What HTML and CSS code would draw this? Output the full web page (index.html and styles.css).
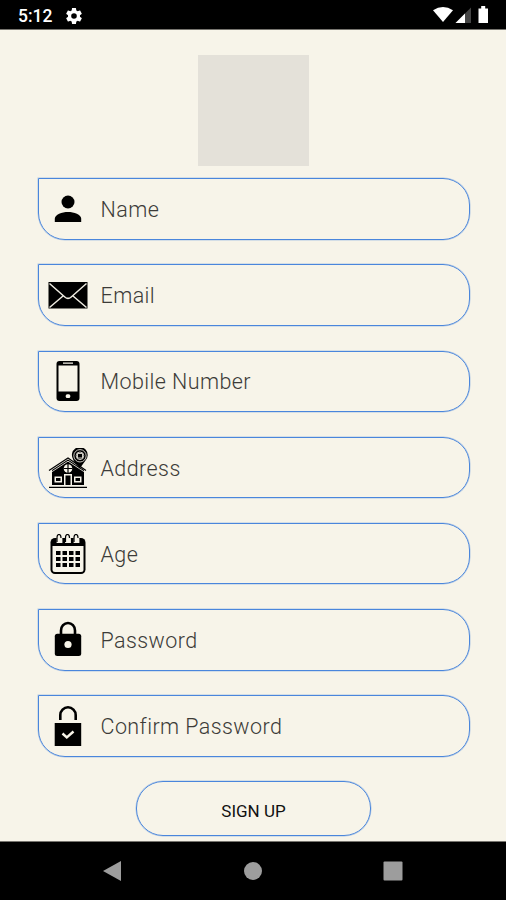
FILE: index.html
```html
<!DOCTYPE html>
<html lang="en">
<head>
<meta charset="utf-8">
<title>Sign up</title>
<link rel="stylesheet" href="styles.css">
</head>
<body>
<header class="status">
  <span class="time">5:12</span>
  <svg class="gear" viewBox="2 2 20 20"><path fill-rule="evenodd" d="M19.43 12.98c.04-.32.07-.64.07-.98s-.03-.66-.07-.98l2.11-1.65c.19-.15.24-.42.12-.64l-2-3.46c-.12-.22-.39-.3-.61-.22l-2.49 1c-.52-.4-1.08-.73-1.69-.98l-.38-2.65A.49.49 0 0 0 14 2h-4c-.25 0-.46.18-.49.42l-.38 2.65c-.61.25-1.17.59-1.69.98l-2.49-1c-.23-.09-.49 0-.61.22l-2 3.46c-.13.22-.07.49.12.64l2.11 1.65c-.04.32-.07.65-.07.98s.03.66.07.98l-2.11 1.65c-.19.15-.24.42-.12.64l2 3.46c.12.22.39.3.61.22l2.49-1c.52.4 1.08.73 1.69.98l.38 2.65c.03.24.24.42.49.42h4c.25 0 .46-.18.49-.42l.38-2.65c.61-.25 1.17-.59 1.69-.98l2.49 1c.23.09.49 0 .61-.22l2-3.46c.12-.22.07-.49-.12-.64zM12 15.500a3.500 3.500 0 1 1 0-7 3.500 3.500 0 0 1 0 7z"/></svg>
  <svg class="signals" viewBox="0 0 58 18">
    <path d="M0 4.300Q10 -2.500 20 4.300L10 16z"/>
    <path class="dim" d="M38 1.500V17H22.500z"/><path d="M32 7.500V17H22.500z"/>
    <path d="M45.500 2.500h2.700V0h4v2.500H55V17h-9.500z"/>
  </svg>
</header>
<main class="screen">
  <div class="logo"></div>
  <form class="form">
    <label class="field">
      <svg class="icon" viewBox="0 0 40 40"><circle cx="20" cy="13" r="6.500"/><path d="M6.800 33v-3.200C6.800 25.500 14 23 20 23s13.200 2.500 13.200 6.800V33z"/></svg>
      <span>Name</span>
    </label>
    <label class="field">
      <svg class="icon" viewBox="0 0 40 40"><path d="M.5 7h39v26.500H.500z"/><path class="cut" d="M1.500 8.500 16.800 22q3.200 2.800 6.400 0L38.500 8.500M1.500 32.500 15 21M38.500 32.500 25 21"/></svg>
      <span>Email</span>
    </label>
    <label class="field">
      <svg class="icon" viewBox="0 0 40 40"><rect x="8.500" y="0" width="23" height="40" rx="3"/><path class="paper" d="M10.500 4.500h19v26h-19zM15 1.600h10v1.200H15z"/><rect class="paper" x="17.700" y="33.200" width="4.600" height="3.800" rx="1.500"/></svg>
      <span>Mobile Number</span>
    </label>
    <label class="field">
      <svg class="icon" viewBox="0 0 40 40">
        <path d="M4 22 20 11.500 36 22v15H4zM1 38.700h38V40H1z"/>
        <path class="line" d="M1 22.500 20 10l18 12.500"/>
        <path class="pale" d="M3.500 24 20 13.200 36.500 24"/>
        <path d="M25 11a7.900 7.900 0 1 1 12.500 1.500l-5.800 8-5.200-6.500q-1.200-1.500-1.500-3z"/>
        <circle class="pale" cx="32" cy="7.800" r="6.200"/>
        <circle class="pale" cx="32" cy="7.800" r="3.800"/>
        <path class="pale" d="M29.500 5.500h5v4.500h-5z"/>
        <circle class="paper" cx="20" cy="20.500" r="4.300"/>
        <path class="line" d="M20 16v9M15.500 20.500h9"/>
        <path class="paper" d="M16 26h8v11h-8zM6.500 28.500h7.500v6H6.500zM26 28.500h7.500v6H26z"/>
        <path d="M17.500 27.500h5V37h-5zM8 30h4.500v3H8zM27.500 30H32v3h-4.500z"/>
      </svg>
      <span>Address</span>
    </label>
    <label class="field">
      <svg class="icon" viewBox="0 0 40 40">
        <rect x="2.500" y="4" width="35" height="36" rx="4.500"/>
        <path class="paper" d="M4.500 12h31v23.500q0 2.500-2.500 2.500H7q-2.500 0-2.500-2.500z"/>
        <path class="ring" d="M9 9V5q0-3.500 2.500-3.500T14 5v4M17.500 9V5q0-3.500 2.500-3.500T22.500 5v4M26 9V5q0-3.500 2.500-3.500T31 5v4"/>
        <path class="ringline" d="M9 8V4q0-3.500 2-3.500T13 4M17.500 8V4q0-3.500 2-3.500T21.500 4M26 8V4q0-3.500 2-3.500T30 4"/>
        <path d="M8 17h4.500v4H8zM14.500 17H19v4h-4.500zM21 17h4.500v4H21zM27.500 17H32v4h-4.500zM8 23h4.500v4H8zM14.500 23H19v4h-4.500zM21 23h4.500v4H21zM27.500 23H32v4h-4.500zM8 29h4.500v4H8zM14.500 29H19v4h-4.500zM21 29h4.500v4H21zM27.500 29H32v4h-4.500z"/>
      </svg>
      <span>Age</span>
    </label>
    <label class="field">
      <svg class="icon" viewBox="0 0 40 40"><path class="shackle" d="M13 15V10.500a7 7.500 0 0 1 14 0V15"/><rect x="6.800" y="13.700" width="26.400" height="22.300" rx="2.500"/><circle class="paper" cx="20" cy="24.500" r="3.600"/></svg>
      <span>Password</span>
    </label>
    <label class="field">
      <svg class="icon" viewBox="0 0 40 40"><path class="shackle" d="M12.300 14V9a7.700 7.700 0 0 1 15.400 0v5"/><path d="M6.700 17h26.500v23H6.700z"/><path class="check" d="m14.500 27.500 4.300 4 6.700-6"/></svg>
      <span>Confirm Password</span>
    </label>
    <button class="submit" type="button">SIGN UP</button>
  </form>
</main>
<nav class="nav">
  <svg viewBox="0 0 20 20"><path d="M0 10 18 0v20z"/></svg>
  <svg viewBox="0 0 20 20"><circle cx="10" cy="10" r="9"/></svg>
  <svg viewBox="0 0 20 20"><rect x=".500" y=".500" width="19" height="19" rx="1"/></svg>
</nav>
</body>
</html>
```
FILE: styles.css
```css
* { box-sizing: border-box; }
body {
  margin: 0;
  width: 506px;
  height: 900px;
  display: flex;
  flex-direction: column;
  overflow: hidden;
  background: #f7f4e9;
  font-family: Roboto, "Liberation Sans", sans-serif;
}
svg { display: block; flex: none; }
.status {
  height: 30px;
  flex: none;
  display: flex;
  align-items: flex-start;
  padding: 7px 15px 0 18px;
  background: #000;
  border-bottom: 1px solid #77756f;
  color: #fff;
  fill: #fff;
}
.time { width: 48px; font-size: 17.5px; line-height: 19px; font-weight: 500; }
.gear { width: 16px; height: 16px; margin-top: 1px; }
.signals { width: 58px; height: 18px; margin: -1px 0 0 auto; }
.dim { fill: #444; }
.screen {
  flex: 1;
  display: flex;
  flex-direction: column;
  align-items: center;
  padding-top: 25px;
}
.logo { width: 111px; height: 111px; flex: none; background: #e4e1d9; }
.form {
  width: 432px;
  margin: 12.3px 0 0 1px;
  display: flex;
  flex-direction: column;
  align-items: center;
  gap: 24.67px;
}
.field {
  width: 100%;
  height: 61.5px;
  display: flex;
  align-items: center;
  padding-left: 9.5px;
  border: 1px solid #4a86dc;
  border-radius: 0 27px 27px 27px;
  box-shadow: 0 0 0 .5px rgba(74, 134, 220, .4);
  color: #3c3b38;
  font-size: 21.5px;
  font-weight: 300;
  letter-spacing: .42px;
}
.field span { padding-top: 1px; }
.icon { width: 40px; height: 40px; margin-right: 12.5px; }
.cut { fill: none; stroke: #eeebe1; stroke-width: 1.5; }
.paper { fill: #f7f4e9; }
.line { fill: none; stroke: #000; stroke-width: 1.2; }
.pale { fill: none; stroke: #e5e2d9; stroke-width: .9; }
.ring { fill: #f7f4e9; stroke: #f7f4e9; stroke-width: .8; }
.ringline { fill: none; stroke: #000; stroke-width: 1.2; }
.shackle { fill: none; stroke: #000; stroke-width: 2.6; }
.check { fill: none; stroke: #f7f4e9; stroke-width: 2.4; }
.submit {
  width: 235px;
  height: 55px;
  margin: 0;
  padding: 5px 0 0;
  border: 1px solid #4a86dc;
  border-radius: 27px;
  box-shadow: 0 0 0 .5px rgba(74, 134, 220, .4);
  background: none;
  color: #111;
  font: 400 17px Roboto, "Liberation Sans", sans-serif;
}
.nav {
  height: 59px;
  flex: none;
  display: flex;
  justify-content: space-between;
  align-items: center;
  padding: 0 103px;
  background: #000;
  border-top: 1px solid #77756f;
  fill: #9d9d9d;
}
.nav svg { width: 20px; height: 20px; }
```
